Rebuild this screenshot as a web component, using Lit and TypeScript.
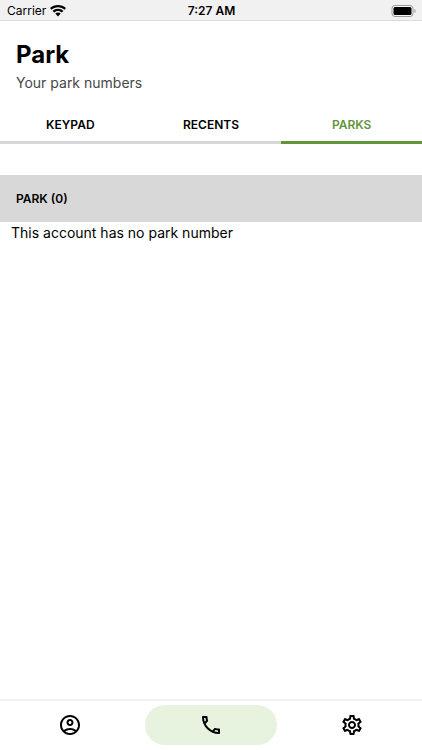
import { LitElement, html, css, svg } from "lit";
import { customElement, state } from "lit/decorators.js";
import { classMap } from "lit/directives/class-map.js";

const accountIcon = svg`<path d="M12 2C6.48 2 2 6.48 2 12s4.48 10 10 10 10-4.48 10-10S17.52 2 12 2zM7.35 18.5C8.66 17.56 10.26 17 12 17s3.34.56 4.65 1.5C15.34 19.44 13.74 20 12 20s-3.34-.56-4.65-1.5zm10.79-1.38C16.45 15.8 14.32 15 12 15s-4.45.8-6.14 2.12C4.7 15.73 4 13.95 4 12c0-4.42 3.58-8 8-8s8 3.58 8 8c0 1.95-.7 3.73-1.86 5.12zM12 6c-1.93 0-3.5 1.57-3.5 3.5S10.07 13 12 13s3.5-1.57 3.5-3.5S13.93 6 12 6zm0 5c-.83 0-1.5-.67-1.5-1.5S11.17 8 12 8s1.5.67 1.5 1.5S12.83 11 12 11z"/>`;
const callIcon = svg`<path d="M6.54 5c.06.89.21 1.76.45 2.59l-1.2 1.2c-.41-1.2-.67-2.47-.76-3.79h1.51m9.86 12.02c.85.24 1.72.39 2.6.45v1.49c-1.32-.09-2.59-.35-3.8-.75l1.2-1.19M7.5 3H4c-.55 0-1 .45-1 1 0 9.39 7.61 17 17 17 .55 0 1-.45 1-1v-3.49c0-.55-.45-1-1-1-1.24 0-2.45-.2-3.57-.57-.1-.04-.21-.05-.31-.05-.26 0-.51.1-.71.29l-2.2 2.2c-2.83-1.45-5.15-3.76-6.59-6.59l2.2-2.2c.28-.28.36-.67.25-1.02C8.7 6.45 8.5 5.25 8.5 4c0-.55-.45-1-1-1z"/>`;
const settingsIcon = svg`<path d="M19.43 12.98c.04-.32.07-.64.07-.98 0-.34-.03-.66-.07-.98l2.11-1.65c.19-.15.24-.42.12-.64l-2-3.46c-.09-.16-.26-.25-.44-.25-.06 0-.12.01-.17.03l-2.49 1c-.52-.4-1.08-.73-1.69-.98l-.38-2.65C14.46 2.18 14.25 2 14 2h-4c-.25 0-.46.18-.49.42l-.38 2.65c-.61.25-1.17.59-1.69.98l-2.49-1c-.06-.02-.12-.03-.18-.03-.17 0-.34.09-.43.25l-2 3.46c-.13.22-.07.49.12.64l2.11 1.65c-.04.32-.07.65-.07.98 0 .33.03.66.07.98l-2.11 1.65c-.19.15-.24.42-.12.64l2 3.46c.09.16.26.25.44.25.06 0 .12-.01.17-.03l2.49-1c.52.4 1.08.73 1.69.98l.38 2.65c.03.24.24.42.49.42h4c.25 0 .46-.18.49-.42l.38-2.65c.61-.25 1.17-.59 1.69-.98l2.49 1c.06.02.12.03.18.03.17 0 .34-.09.43-.25l2-3.46c.12-.22.07-.49-.12-.64l-2.11-1.65zm-1.98-1.71c.04.31.05.52.05.73 0 .21-.02.43-.05.73l-.14 1.13.89.7 1.08.84-.7 1.21-1.27-.51-1.04-.42-.9.68c-.43.32-.84.56-1.25.73l-1.06.43-.16 1.13-.2 1.35h-1.4l-.19-1.35-.16-1.13-1.06-.43c-.43-.18-.83-.41-1.23-.71l-.91-.7-1.06.43-1.27.51-.7-1.21 1.08-.84.89-.7-.14-1.13c-.03-.31-.05-.54-.05-.74s.02-.43.05-.73l.14-1.13-.89-.7-1.08-.84.7-1.21 1.27.51 1.04.42.9-.68c.43-.32.84-.56 1.25-.73l1.06-.43.16-1.13.2-1.35h1.39l.19 1.35.16 1.13 1.06.43c.43.18.83.41 1.23.71l.91.7 1.06-.43 1.27-.51.7 1.21-1.07.85-.89.7.14 1.13zM12 8c-2.21 0-4 1.79-4 4s1.79 4 4 4 4-1.79 4-4-1.79-4-4-4zm0 6c-1.1 0-2-.9-2-2s.9-2 2-2 2 .9 2 2-.9 2-2 2z"/>`;

@customElement("app-root")
export class AppRoot extends LitElement {
  static styles = css`
    :host {
      display: flex;
      flex-direction: column;
      min-height: 100vh;
      background: #fff;
      color: #000;
      font-family: Inter, "Liberation Sans", sans-serif;
    }
    button {
      border: 0;
      padding: 0;
      background: none;
      color: inherit;
      font: inherit;
      cursor: pointer;
    }
    svg {
      display: block;
      fill: currentColor;
    }
    .status {
      display: grid;
      grid-template-columns: 1fr auto 1fr;
      align-items: center;
      padding: 1px 6px 0 7px;
      border-bottom: 1px solid #dcdcdc;
      background: #f1f1f1;
      font-size: 12px;
      line-height: 19px;
    }
    .carrier {
      display: flex;
      align-items: center;
      gap: 4px;
    }
    .time {
      font-weight: 600;
    }
    .battery {
      justify-self: end;
    }
    header {
      padding: 16px 16px 0;
    }
    h1 {
      margin: 0;
      font-size: 24px;
      line-height: 36px;
      font-weight: 700;
    }
    .subtitle {
      margin: 0;
      color: #484848;
      font-size: 14px;
      line-height: 20px;
    }
    .tabs {
      display: flex;
      margin-top: 16px;
    }
    .tab {
      flex: 1;
      border-bottom: 3px solid #d8d8d8;
      font-size: 12px;
      line-height: 32px;
      font-weight: 600;
    }
    .tab.active {
      border-color: #62953a;
      color: #62953a;
    }
    main {
      flex: 1;
      padding-top: 31px;
    }
    h2 {
      margin: 0;
      padding: 0 16px;
      background: #d8d8d8;
      font-size: 12px;
      line-height: 47px;
      font-weight: 600;
    }
    .empty {
      margin: 0;
      padding: 0 11px;
      font-size: 14px;
      line-height: 22px;
    }
    nav {
      display: grid;
      grid-template-columns: repeat(3, 1fr);
      padding: 4px 0 5px;
      border-top: 2px solid #f2f2f2;
    }
    .nav-item {
      display: flex;
      align-items: center;
      justify-content: center;
      height: 40px;
      margin: 0 4px;
      border-radius: 20px;
    }
    .nav-item.current {
      background: #e7f2df;
    }
  `;

  @state() private tab = "PARKS";
  @state() private section = "Calls";

  private tabs = ["KEYPAD", "RECENTS", "PARKS"];
  private sections = [
    { name: "Account", icon: accountIcon },
    { name: "Calls", icon: callIcon },
    { name: "Settings", icon: settingsIcon },
  ];

  render() {
    return html`
      <div class="status">
        <span class="carrier">
          Carrier
          <svg width="16" height="12" viewBox="0 0 16 12" aria-hidden="true">
            <path d="M8 0C4.9 0 2.1 1.2 0 3.1l1.5 1.6C3.2 3.1 5.5 2.2 8 2.2s4.8.9 6.5 2.5L16 3.1C13.9 1.2 11.1 0 8 0z" />
            <path d="M8 3.8c-2.1 0-4 .8-5.4 2.1l1.6 1.6C5.2 6.6 6.5 6 8 6s2.8.6 3.8 1.5l1.6-1.6C12 4.6 10.1 3.8 8 3.8z" />
            <path d="M8 7.6c-1.1 0-2 .4-2.7 1L8 11.5l2.7-2.9c-.7-.6-1.6-1-2.7-1z" />
          </svg>
        </span>
        <span class="time">7:27 AM</span>
        <svg class="battery" width="25" height="12" viewBox="0 0 25 12" aria-hidden="true">
          <rect x="1" y="0.5" width="21" height="11" rx="3" fill="#f8f8f8" stroke="#999" />
          <rect x="2.5" y="2" width="18" height="8" rx="1.5" />
          <path d="M23.4 4c1.6.5 1.6 3.5 0 4z" fill="#999" />
        </svg>
      </div>
      <header>
        <h1>Park</h1>
        <p class="subtitle">Your park numbers</p>
      </header>
      <div class="tabs" role="tablist">
        ${this.tabs.map(
          (name) => html`<button
            class=${classMap({ tab: true, active: name === this.tab })}
            role="tab"
            aria-selected=${name === this.tab}
            @click=${() => (this.tab = name)}
          >${name}</button>`
        )}
      </div>
      <main>
        <h2>PARK (0)</h2>
        <p class="empty">This account has no park number</p>
      </main>
      <nav>
        ${this.sections.map(
          ({ name, icon }) => html`<button
            class=${classMap({ "nav-item": true, current: name === this.section })}
            aria-label=${name}
            @click=${() => (this.section = name)}
          ><svg width="24" height="24" viewBox="0 0 24 24" aria-hidden="true">${icon}</svg></button>`
        )}
      </nav>
    `;
  }
}
